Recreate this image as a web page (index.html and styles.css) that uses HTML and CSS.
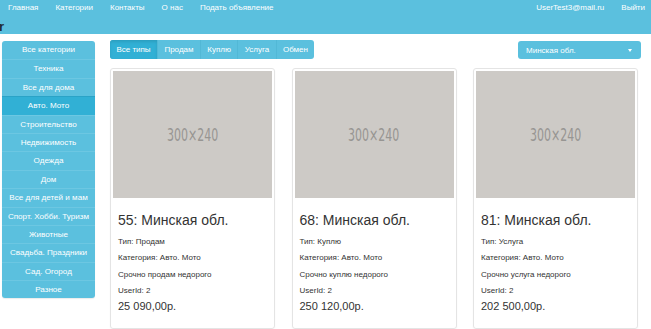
FILE: index.html
```html
<!DOCTYPE html>
<html lang="ru">
	<head>
		<meta charset="UTF-8">
		<title>Объявления</title>
		<link rel="stylesheet" href="styles.css">
	</head>
	<body>

		<div class="navbar">
			<div class="nav-row">
				<ul class="nav">
					<li><a href="#">Главная</a></li>
					<li><a href="#">Категории</a></li>
					<li><a href="#">Контакты</a></li>
					<li><a href="#">О нас</a></li>
					<li><a href="#">Подать объявление</a></li>
				</ul>
				<ul class="nav nav-right">
					<li><a href="#">UserTest3@mail.ru</a></li>
					<li><a href="#">Выйти</a></li>
				</ul>
			</div>
			<div class="brand">r</div>
		</div>

		<div class="page">

			<ul class="categories">
				<li><a href="#">Все категории</a></li>
				<li><a href="#">Техника</a></li>
				<li><a href="#">Все для дома</a></li>
				<li class="active"><a href="#">Авто. Мото</a></li>
				<li><a href="#">Строительство</a></li>
				<li><a href="#">Недвижимость</a></li>
				<li><a href="#">Одежда</a></li>
				<li><a href="#">Дом</a></li>
				<li><a href="#">Все для детей и мам</a></li>
				<li><a href="#">Спорт. Хобби. Туризм</a></li>
				<li><a href="#">Животные</a></li>
				<li><a href="#">Свадьба. Праздники</a></li>
				<li><a href="#">Сад. Огород</a></li>
				<li><a href="#">Разное</a></li>
			</ul>

			<div class="content">

				<div class="toolbar">
					<div class="btn-group">
						<button class="btn active">Все типы</button>
						<button class="btn">Продам</button>
						<button class="btn">Куплю</button>
						<button class="btn">Услуга</button>
						<button class="btn">Обмен</button>
					</div>
					<div class="dropdown">
						<span>Минская обл.</span>
						<span class="caret"></span>
					</div>
				</div>

				<div class="cards">

					<div class="card">
						<div class="thumb"><span>300×240</span></div>
						<div class="caption">
							<h3>55: Минская обл.</h3>
							<p>Тип: Продам</p>
							<p>Категория: Авто. Мото</p>
							<p>Срочно продам недорого</p>
							<p>UserId: 2</p>
							<div class="price">25 090,00р.</div>
						</div>
					</div>

					<div class="card">
						<div class="thumb"><span>300×240</span></div>
						<div class="caption">
							<h3>68: Минская обл.</h3>
							<p>Тип: Куплю</p>
							<p>Категория: Авто. Мото</p>
							<p>Срочно куплю недорого</p>
							<p>UserId: 2</p>
							<div class="price">250 120,00р.</div>
						</div>
					</div>

					<div class="card">
						<div class="thumb"><span>300×240</span></div>
						<div class="caption">
							<h3>81: Минская обл.</h3>
							<p>Тип: Услуга</p>
							<p>Категория: Авто. Мото</p>
							<p>Срочно услуга недорого</p>
							<p>UserId: 2</p>
							<div class="price">202 500,00р.</div>
						</div>
					</div>

				</div>
			</div>
		</div>

	</body>
</html>
```

FILE: styles.css
```css
body {
	margin: 0;
	font-family: "Liberation Sans", Arial, sans-serif;
	color: #333;
	background-color: #fff;
	overflow: hidden;
}
ul {
	list-style: none;
	margin: 0;
	padding: 0;
}
a {
	color: white;
	text-decoration: none;
}
.navbar {
	background-color: #5bc0de;
	height: 34px;
}
.nav-row {
	display: flex;
	justify-content: space-between;
	height: 15px;
}
.nav {
	display: flex;
	font-size: 8px;
	line-height: 15px;
}
.nav li {
	padding: 0 8.5px;
}
.nav li:first-child {
	padding-left: 8px;
}
.nav-right li:last-child {
	padding-right: 6px;
}
.brand {
	font-size: 13px;
	font-weight: bold;
	color: #1d2b33;
	line-height: 16px;
	margin-top: 4px;
	margin-left: -1px;
}
.page {
	display: flex;
	padding-top: 6px;
}
.categories {
	width: 93px;
	margin-left: 2px;
	margin-top: 1px;
	background-color: #5bc0de;
	border-radius: 3px;
	align-self: flex-start;
	box-shadow: 0 1px 1px rgba(0, 0, 0, 0.08);
}
.categories li {
	height: 18.4px;
	line-height: 18px;
	text-align: center;
	font-size: 8.1px;
	border-top: 1px solid #6cc7e2;
	box-sizing: border-box;
	white-space: nowrap;
}
.categories li:first-child {
	border-top: none;
	border-radius: 3px 3px 0 0;
}
.categories li.active {
	background-color: #31b0d5;
	border-top-color: #2aa3c7;
}
.content {
	margin-left: 15px;
	width: 531px;
}
.toolbar {
	display: flex;
	justify-content: space-between;
	align-items: flex-start;
}
.btn-group {
	display: flex;
	background-color: #5bc0de;
	border-radius: 3px;
	overflow: hidden;
	height: 19px;
}
.btn {
	font-family: inherit;
	font-size: 8px;
	color: white;
	background: none;
	border: none;
	border-left: 1px solid #52b8d6;
	padding: 0 6.4px;
	height: 19px;
}
.btn:first-child {
	border-left: none;
}
.btn.active {
	background-color: #31b0d5;
	box-shadow: inset 0 2px 3px rgba(0, 0, 0, 0.1);
}
.dropdown {
	display: flex;
	justify-content: space-between;
	align-items: center;
	width: 123px;
	height: 18px;
	margin-top: 1px;
	box-sizing: border-box;
	padding: 0 8px;
	background-color: #5bc0de;
	border-radius: 3px;
	color: white;
	font-size: 8px;
}
.caret {
	width: 0;
	height: 0;
	border-left: 2.5px solid transparent;
	border-right: 2.5px solid transparent;
	border-top: 3px solid white;
	margin-right: 1px;
}
.cards {
	display: grid;
	grid-template-columns: repeat(3, 165px);
	column-gap: 16.5px;
	margin-top: 9px;
}
.card {
	border: 1px solid #e4e4e4;
	border-radius: 3px;
	padding: 2px;
	height: 255px;
	box-shadow: 0 1px 2px rgba(0, 0, 0, 0.04);
}
.thumb {
	height: 127px;
	background-color: #cdcac6;
	color: #979592;
	font-family: "DejaVu Sans", sans-serif;
	font-stretch: condensed;
	font-size: 17px;
	display: flex;
	align-items: center;
	justify-content: center;
}
.thumb span {
	display: inline-block;
	transform: scaleX(0.72);
}
.caption {
	padding: 0 5px;
}
.caption h3 {
	font-size: 14px;
	font-weight: normal;
	margin: 14px 0 5px 0;
	line-height: 17px;
}
.caption p {
	font-size: 8px;
	margin: 0;
	line-height: 16.3px;
}
.price {
	font-size: 11px;
	line-height: 14px;
}
```
